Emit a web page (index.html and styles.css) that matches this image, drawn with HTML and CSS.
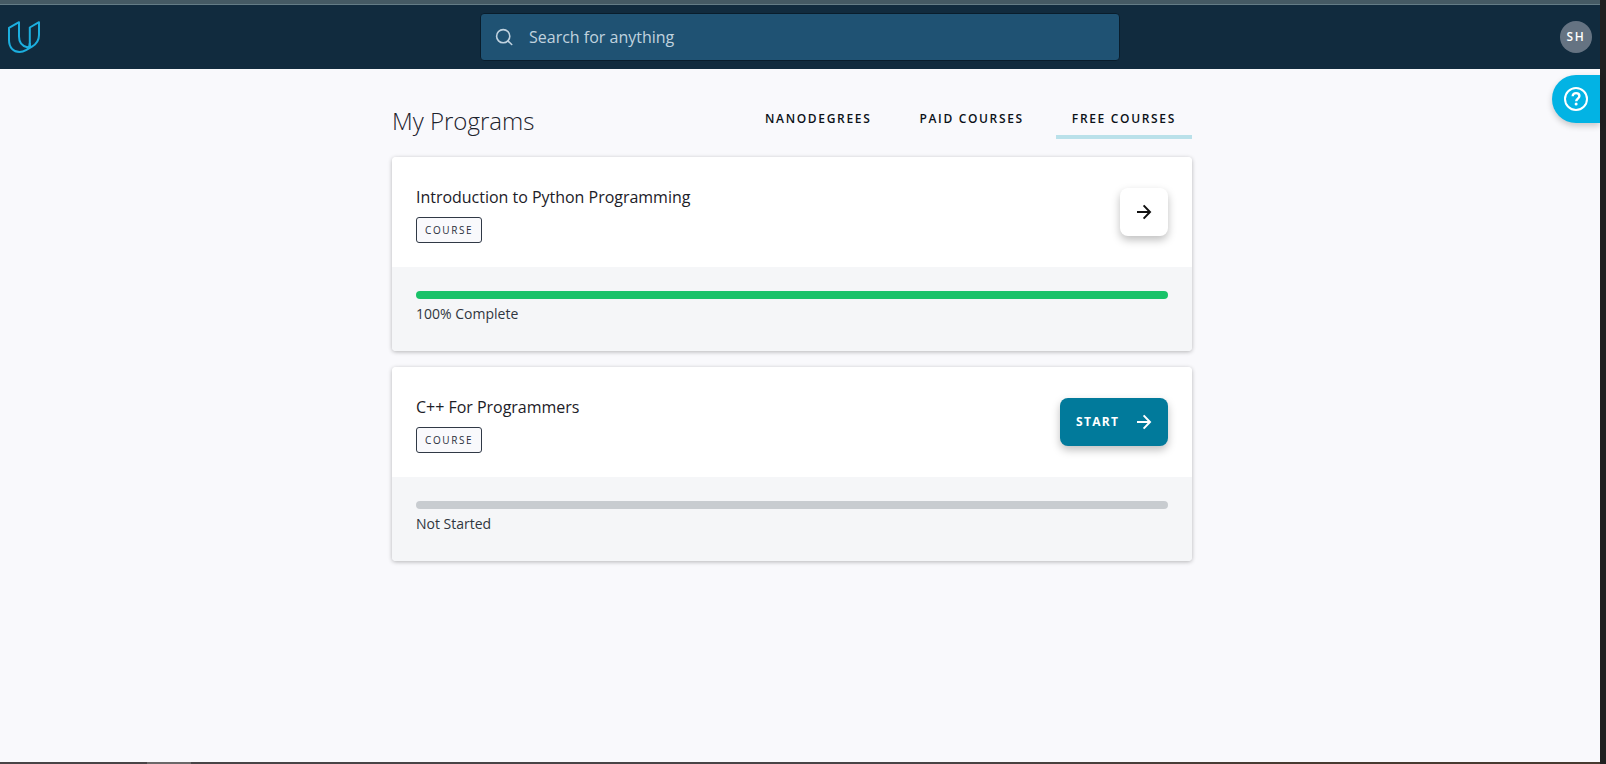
FILE: index.html
```html
<!DOCTYPE html>
<html lang="en">
<head>
<meta charset="utf-8">
<title>My Programs</title>
<link rel="stylesheet" href="styles.css">
</head>
<body>
<div class="frame">
  <div class="browser-edge"></div>
  <div class="middle">
    <div class="page">
      <header class="header">
        <a class="logo"><svg width="32" height="32" viewBox="0 0 32 32" fill="none" stroke="#1caede" stroke-width="2" stroke-linejoin="round"><path d="M11 1.200 1 6.800V19C1 26.500 5.500 31 11.500 31c2.500 0 4.500-.7 6.500-1.900l6-3.400c4.500-2.700 7-6.200 7-11.700V1.200L21.800 6.500V22.500c0 2.500-.8 3.700-2.600 3.700C14 25 11 21.500 11 15.500z"/><path d="M19.200 26.200c1.600.3 2.800-.2 4.300-1M21.800 22v4.500"/></svg></a>
        <div class="search">
          <svg width="18" height="18" viewBox="0 0 18 18" fill="none" stroke="#c0d2df" stroke-width="1.6" stroke-linecap="round"><circle cx="8.200" cy="8.200" r="6.600"/><path d="m13.100 13.100 3.600 3.400"/></svg>
          <span>Search for anything</span>
        </div>
        <div class="avatar">SH</div>
      </header>
      <button class="help" aria-label="Help"><svg width="24" height="24" viewBox="0 0 24 24" fill="none" stroke="#fff" stroke-width="2"><circle cx="12" cy="12" r="11"/><path d="M8.700 9.300C8.700 7.300 10.200 6.100 12.100 6.100s3.300 1.200 3.300 3c0 2.500-3.200 2.500-3.200 5.100" stroke-width="2.400"/><circle cx="12.100" cy="17.100" r="1.500" fill="#fff" stroke="none"/></svg></button>
      <main class="content">
        <div class="heading">
          <h1>My Programs</h1>
          <nav class="tabs"><a>Nanodegrees</a><a>Paid Courses</a><a class="active">Free Courses</a></nav>
        </div>
        <section class="card">
          <div class="card-top">
            <div class="info"><h2>Introduction to Python Programming</h2><span class="badge">Course</span></div>
            <button class="open" aria-label="Open"><svg width="16" height="16" viewBox="0 0 16 16" fill="none" stroke="currentColor" stroke-width="2"><path d="M1 8h13M7.600 1.400 14 8l-6.400 6.600"/></svg></button>
          </div>
          <div class="card-bottom"><div class="bar done"></div><p>100% Complete</p></div>
        </section>
        <section class="card">
          <div class="card-top">
            <div class="info"><h2>C++ For Programmers</h2><span class="badge">Course</span></div>
            <button class="start"><span>Start</span><svg width="16" height="16" viewBox="0 0 16 16" fill="none" stroke="currentColor" stroke-width="2"><path d="M1 8h13M7.600 1.400 14 8l-6.400 6.600"/></svg></button>
          </div>
          <div class="card-bottom"><div class="bar"></div><p>Not Started</p></div>
        </section>
      </main>
    </div>
    <div class="side-edge"></div>
  </div>
  <div class="bottom-edge"></div>
</div>
</body>
</html>
```
FILE: styles.css
```css
* { box-sizing: border-box; }
body, h1, h2, p { margin: 0; }
body { font-family: "Open Sans", sans-serif; color: #1c2027; overflow: hidden; }
button { border: 0; padding: 0; font: inherit; }
svg { display: block; flex: none; }
.frame { height: 764px; display: flex; flex-direction: column; background: #f9f9fc; }
.browser-edge { height: 5px; flex: none; background: #455a64; border-bottom: 1px solid #647c86; width: 1600px; }
.middle { flex: 1; display: flex; }
.page { width: 1600px; position: relative; background: #f9f9fc; }
.side-edge { flex: 1; background: #202020; margin-top: -5px; margin-bottom: -2px; }
.bottom-edge { height: 2px; width: 1600px; background: linear-gradient(90deg, #484446 0 147px, #6b6869 147px 191px, #484446 191px 900px, #483a30 1300px); }
.header { height: 64px; background: #112b3e; display: grid; grid-template-columns: 1fr 640px 1fr; align-items: center; padding: 0 8px; }
.search { height: 48px; border: 1px solid #091d2c; border-radius: 4px; background: #1f5273; display: flex; align-items: center; gap: 16px; padding-left: 14px; color: #c0d2df; font-size: 16px; }
.avatar { justify-self: end; width: 32px; height: 32px; border-radius: 50%; background: #657382; color: #fff; font-size: 12px; font-weight: 600; letter-spacing: 1.6px; padding: 0 0 2px 0; display: flex; align-items: center; justify-content: center; }
.help { position: absolute; right: 0; top: 70px; width: 48px; height: 48px; border-radius: 24px 0 0 24px; background: #02b3e4; padding-left: 12px; box-shadow: 0 3px 6px rgba(0, 0, 0, .2); }
.content { width: 800px; margin: 0 0 0 392px; padding-top: 32px; }
.heading { display: flex; justify-content: space-between; height: 56px; }
h1 { font-size: 24px; line-height: 40px; font-weight: 300; color: #1c222c; }
.tabs { display: flex; gap: 16px; height: 38px; }
.tabs a { padding: 6px 16px 0; font-size: 12px; line-height: 24px; font-weight: 600; letter-spacing: 1.67px; text-transform: uppercase; color: #0b1118; border-bottom: 4px solid transparent; }
.tabs .active { border-color: #bae1ea; }
.card { border-radius: 4px; overflow: hidden; margin-bottom: 16px; box-shadow: 0 1px 4px rgba(0, 0, 0, .28); }
.card-top { height: 110px; background: #fff; padding: 0 24px; display: flex; align-items: center; justify-content: space-between; }
.info { padding-top: 4px; }
h2 { font-size: 16px; line-height: 24px; font-weight: 400; margin-bottom: 8px; letter-spacing: -.02px; }
.badge { display: flex; width: 66px; height: 26px; border: 1px solid #303946; border-radius: 3px; background: #f9f9fc; font-size: 10px; line-height: 24px; letter-spacing: 1.6px; padding-left: 8px; text-transform: uppercase; color: #2a303b; }
.open, .start { height: 48px; border-radius: 8px; display: flex; align-items: center; box-shadow: 0 4px 8px rgba(0, 0, 0, .25); }
.open { width: 48px; background: #fff; color: #111; justify-content: center; }
.start { width: 108px; padding: 0 16px; justify-content: space-between; background: #017a9b; color: #fff; font-size: 12px; line-height: 16px; font-weight: 700; letter-spacing: 1.3px; text-transform: uppercase; }
.start span { margin-top: -1px; }
.card-bottom { height: 84px; background: #f5f6f8; padding: 24px; }
.bar { height: 8px; border-radius: 4px; background: #c8ccd0; }
.bar.done { background: #19c269; }
.card-bottom p { font-size: 14px; line-height: 16px; padding-top: 7px; color: #303640; }
```
